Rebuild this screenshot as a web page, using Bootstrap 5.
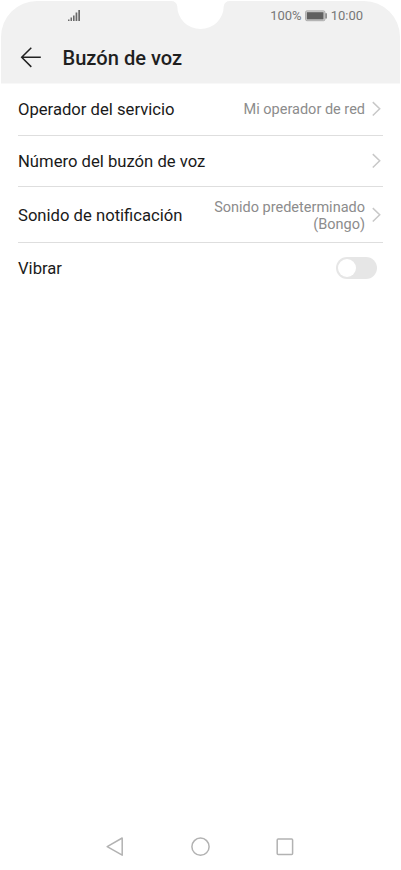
<!DOCTYPE html>
<html lang="es">
<head>
    <meta charset="UTF-8">
    <meta name="viewport" content="width=device-width, initial-scale=1.0">
    <title>Buzón de voz</title>
    <link href="https://cdn.jsdelivr.net/npm/bootstrap@5.3.0/dist/css/bootstrap.min.css" rel="stylesheet">
    <style>
        body {
            font-family: Roboto, sans-serif;
            color: #1a1a1a;
            background: #fff;
        }
        svg { display: block; flex-shrink: 0; }
        .phone { height: 870px; overflow: hidden; }
        .top-area { height: 84px; }
        .top-shape { z-index: 0; }
        .status-bar {
            height: 31px;
            padding: 0 37px 0 68px;
            font-size: 13px;
            line-height: 15px;
            color: #777;
        }
        .battery { margin: 0 4px 0 3px; }
        .clock { margin-right: 1px; }
        .title-bar { height: 51px; padding: 0 20px; gap: 20.5px; }
        .title-bar h1 { font-size: 20.1px; font-weight: 500; line-height: 24px; color: #1f1f1f; padding-top: 2px; }
        .settings { margin: 0 18px; }
        .setting {
            height: 51.6px;
            border-bottom: 1px solid #dedede;
            font-size: 16.65px;
            line-height: 20px;
        }
        .setting.tall { height: 55.8px; }
        .setting:last-child { height: 50px; border-bottom: 0; }
        .setting > span { padding-top: 2px; }
        .setting-value { font-size: 14.5px; line-height: 17px; color: #8c8c8c; }
        .setting:first-child .setting-value { padding-top: 1px; }
        .arrow { margin: 0 2px 0 7px; }
        .toggle {
            width: 41px;
            height: 22px;
            padding: 2px;
            margin-right: 6px;
            background: #e6e6e6;
        }
        .toggle span { width: 18px; height: 18px; background: #fff; }
        .nav-keys { height: 47px; padding: 0 107px 0 106px; }
    </style>
</head>
<body>
    <div class="phone d-flex flex-column">
        <header class="top-area position-relative">
            <svg class="top-shape position-absolute top-0 start-0" width="401" height="84" viewBox="0 0 401 84">
                <path fill="#f1f1f1" d="M1 83.500V37A36 36 0 0 1 37 1H171Q176.500 1 177.300 6.500A23.200 22.500 0 0 0 223.700 6.500Q224.500 1 230 1H364A36 36 0 0 1 400 37V83.500Z"/>
            </svg>
            <div class="status-bar position-relative d-flex justify-content-between align-items-center">
                <svg width="13" height="13" viewBox="0 0 13 13" fill="#6a6a6a">
                    <path d="M0 10.500h1.500v1.500H0zM2.500 8.500H4V12H2.500zM5 6.500h1.600V12H5zM7.600 3.500h1.700V12H7.600zM10.300 1H12v11h-1.700z"/>
                </svg>
                <div class="d-flex align-items-center">
                    <span>100%</span>
                    <svg class="battery" width="22" height="12" viewBox="0 0 22 12">
                        <rect x=".6" y=".9" width="19.300" height="9.800" rx="1.300" fill="#d5d5d5" stroke="#aaa"/>
                        <rect x="1.800" y="2.200" width="16.700" height="7.200" fill="#606060"/>
                        <path d="M20.400 3.300h1.400v5.200h-1.400z" fill="#777"/>
                    </svg>
                    <span class="clock">10:00</span>
                </div>
            </div>
            <div class="title-bar position-relative d-flex align-items-center">
                <svg width="22" height="22" viewBox="0 0 22 22" fill="none" stroke="#222" stroke-width="1.500">
                    <path d="M11.300 1.700 1.700 11.300l9.600 9.600M1.700 11.300H20.800"/>
                </svg>
                <h1 class="mb-0">Buzón de voz</h1>
            </div>
        </header>

        <main class="settings flex-grow-1">
            <div class="setting d-flex align-items-center">
                <span class="me-auto">Operador del servicio</span>
                <span class="setting-value">Mi operador de red</span>
                <svg class="arrow" width="9" height="16" viewBox="0 0 9 16" fill="none" stroke="#c8c8c8" stroke-width="1.500">
                    <path d="M.8 1.100 7.700 7.800.8 14.500"/>
                </svg>
            </div>
            <div class="setting d-flex align-items-center">
                <span class="me-auto">Número del buzón de voz</span>
                <svg class="arrow" width="9" height="16" viewBox="0 0 9 16" fill="none" stroke="#c8c8c8" stroke-width="1.500">
                    <path d="M.8 1.100 7.700 7.800.8 14.500"/>
                </svg>
            </div>
            <div class="setting tall d-flex align-items-center">
                <span class="me-auto">Sonido de notificación</span>
                <span class="setting-value text-end">Sonido predeterminado<br>(Bongo)</span>
                <svg class="arrow" width="9" height="16" viewBox="0 0 9 16" fill="none" stroke="#c8c8c8" stroke-width="1.500">
                    <path d="M.8 1.100 7.700 7.800.8 14.500"/>
                </svg>
            </div>
            <div class="setting d-flex align-items-center">
                <span class="me-auto">Vibrar</span>
                <div class="toggle rounded-pill"><span class="d-block rounded-circle"></span></div>
            </div>
        </main>

        <footer class="nav-keys d-flex justify-content-between align-items-center">
            <svg width="18" height="20" viewBox="0 0 18 20" fill="none" stroke="#b2b2b2" stroke-width="1.500" stroke-linejoin="round">
                <path d="M16.200 1v17.200L1.200 9.600z"/>
            </svg>
            <svg width="20" height="20" viewBox="0 0 20 20" fill="none" stroke="#b2b2b2" stroke-width="1.500">
                <circle cx="10.500" cy="9.700" r="8.600"/>
            </svg>
            <svg width="18" height="18" viewBox="0 0 18 18" fill="none" stroke="#b2b2b2" stroke-width="1.500">
                <rect x="1.200" y="1" width="15.400" height="15.400" rx="1"/>
            </svg>
        </footer>
    </div>
    <script src="https://cdn.jsdelivr.net/npm/bootstrap@5.3.0/dist/js/bootstrap.bundle.min.js"></script>
</body>
</html>
